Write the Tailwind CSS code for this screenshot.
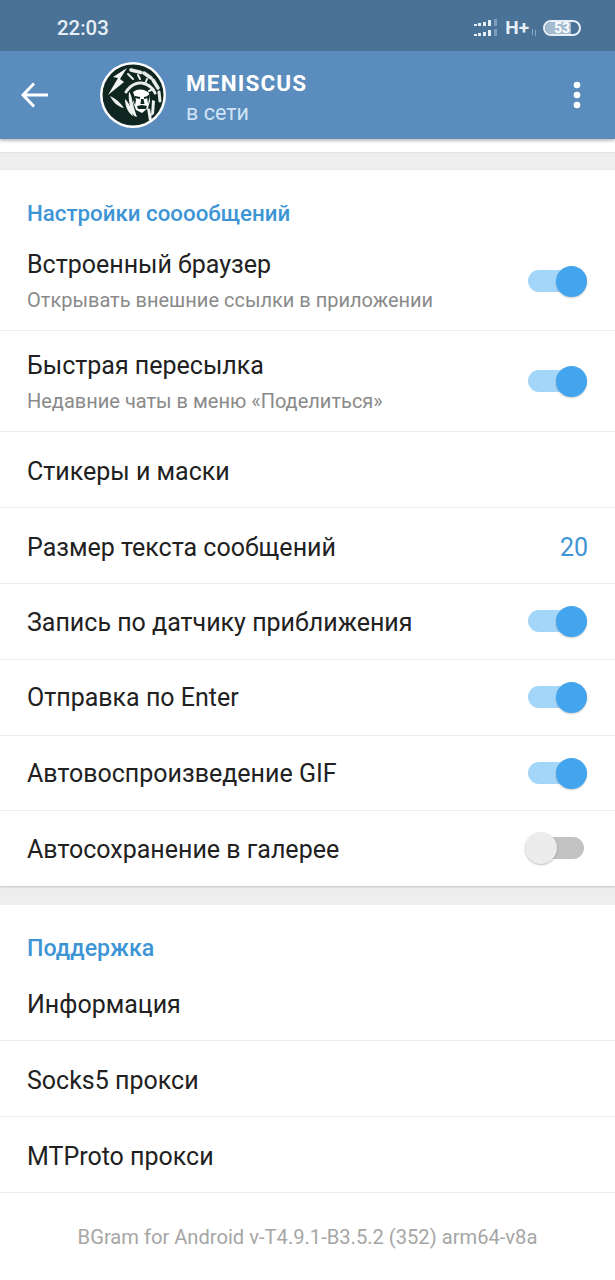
<!DOCTYPE html>
<html lang="en">
  <head>
    <meta charset="UTF-8" />
    <meta name="viewport" content="width=device-width, initial-scale=1.0" />
    <title>Настройки</title>
    <script src="https://cdn.jsdelivr.net/npm/@tailwindcss/browser@4"></script>
  </head>
  <body class="bg-white">
    <div class="w-[615px] h-[1280px] overflow-hidden font-['Roboto',sans-serif] text-[#212121] flex flex-col">
      <!-- Status bar -->
      <div class="h-[51px] shrink-0 bg-[#4a7297] flex items-center text-[#e6eef6]">
        <span class="ml-[57px] text-[20.400px] font-medium leading-none mt-[6px]">22:03</span>
        <div class="ml-auto mr-[34px] flex items-center mt-[4px]">
          <svg width="24" height="18" viewBox="0 0 24 18" fill="#e6eef6">
            <rect x="0" y="5" width="3" height="2" /><rect x="4" y="4" width="3" height="3" /><rect x="9" y="3" width="3" height="4" /><rect x="14" y="1" width="3" height="6" /><rect x="20" y="0" width="3" height="7" fill="#7f9cb8" />
            <rect x="0" y="15" width="3" height="2" /><rect x="4" y="14" width="3" height="3" /><rect x="9" y="13" width="3" height="4" /><rect x="14" y="11" width="3" height="6" /><rect x="20" y="10" width="3" height="7" fill="#7f9cb8" />
          </svg>
          <span class="ml-[7px] text-[19px] font-bold leading-none">H+</span>
          <svg class="ml-[2px] mt-[9px]" width="6" height="7" viewBox="0 0 6 7" stroke="#8faac4" fill="none">
            <path d="M1.500 0v6M4.500 1v6" />
          </svg>
          <div class="ml-[6px] relative w-[38px] h-[16px] rounded-full border-2 border-[#e6eef6] overflow-hidden">
            <div class="absolute left-0 top-0 bottom-0 w-[26px] bg-[#a5bbd0]"></div>
            <span class="absolute inset-0 flex items-center justify-center text-[14px] font-bold leading-none text-white">53</span>
          </div>
        </div>
      </div>

      <!-- Toolbar -->
      <header class="h-[88px] shrink-0 bg-[#5a8dbe] flex items-center relative z-10 shadow-[0_2px_3px_rgba(0,0,0,0.25)]">
        <svg class="ml-[21px]" width="28" height="26" viewBox="0 0 28 26" fill="none" stroke="#fff" stroke-width="3">
          <path d="M27 13H2M13 1.500 2 13l11 11.500" />
        </svg>
        <!-- Chief emblem avatar -->
        <svg class="ml-[51px]" width="66" height="66" viewBox="0 0 66 66">
          <circle cx="33" cy="33" r="33" fill="#fff" />
          <circle cx="33" cy="33" r="30.500" fill="#0f2620" />
          <!-- headdress -->
          <path d="M27 6 13 15l5 1-10 17 16-13-4-3z" fill="#f4f6f4" />
          <g fill="none" stroke="#e8ede9" stroke-linecap="round">
            <path d="M31 8l10 2.500" stroke-width="3.500" />
            <path d="M44 11l7 5" stroke-width="3.500" />
            <path d="M53 18l5 8" stroke-width="3.500" />
            <path d="M59 30l1 9" stroke-width="3" />
            <path d="M26 30c4-6 9-9 14-9s12 3 15 10" stroke-width="3" stroke-dasharray="4 1" />
            <path d="M28 12l5 5M38 13l2 4M47 17l-2 5M53 27l-4 2" stroke-width="2" />
          </g>
          <!-- lower feathers -->
          <path d="M10 34c5 2 10 6 14 12-6-1-11-6-14-12zM25 37c4 4 7 10 8 17-5-3-8-10-8-17zM52 38l3 1-1 13-3 2zM29 30c3 2 3 12 8 25l-3-1c-4-7-6-16-5-24zM47 46l3 1 2 11-3 1z" fill="#eef2ef" />
          <!-- face -->
          <path d="M33 30c5-4 12-3 16 1l1 8-2 7-6 5-6-3-3-8z" fill="#fff" />
          <path d="M35 34l5 1v2l-5-1zM44 35l4-1v2l-4 1zM41 37h2.500l1 5h-4zM37 44l5-1 5 1-1 3h-8zM33 30l3 8-1 5-2-5zM50 32l-2 10-1-8z" fill="#0f2620" />
        </svg>
        <div class="ml-[20px] flex flex-col">
          <span class="text-[22.500px] font-bold tracking-[1.150px] text-white leading-[26px] mt-[6px]">MENISCUS</span>
          <span class="text-[21.500px] text-[#cfe3f5] leading-[26px] mt-[4px]">в сети</span>
        </div>
        <svg class="ml-auto mr-[33px]" width="10" height="28" viewBox="0 0 10 28" fill="#fff">
          <circle cx="5" cy="4" r="3.300" /><circle cx="5" cy="14" r="3.300" /><circle cx="5" cy="24" r="3.300" />
        </svg>
      </header>

      <div class="h-[13px] shrink-0 bg-white"></div>
      <div class="h-[18px] shrink-0 bg-[#eeeeee] border-t border-[#e2e2e2]"></div>

      <!-- Message settings -->
      <section class="h-[716px] shrink-0 flex flex-col shadow-[0_1px_2px_rgba(0,0,0,0.18)] relative">
        <h2 class="h-[61px] shrink-0 pt-[30px] pl-[27px] text-[22.300px] font-medium text-[#3d95d5] leading-[26px]">Настройки сооообщений</h2>
        <!-- Rows with a subtitle -->
        <div class="h-[100px] shrink-0 pl-[27px] pr-[28px] flex items-center justify-between border-b border-[#ececec]">
          <div class="flex flex-col">
            <span class="text-[25px] leading-[30px] mt-[1px]">Встроенный браузер</span>
            <span class="text-[20px] text-[#8a8a8a] leading-[24px] mt-[8px]">Открывать внешние ссылки в приложении</span>
          </div>
          <div class="relative w-[59px] h-[22px] rounded-full bg-[#a3d6f9]">
            <div class="absolute right-0 top-[-4px] w-[31px] h-[31px] rounded-full bg-[#42a5ed] shadow-[0_1px_2px_rgba(0,0,0,0.2)]"></div>
          </div>
        </div>
        <div class="h-[101px] shrink-0 pl-[27px] pr-[28px] flex items-center justify-between border-b border-[#ececec]">
          <div class="flex flex-col">
            <span class="text-[25px] leading-[30px] mt-[1px]">Быстрая пересылка</span>
            <span class="text-[20px] text-[#8a8a8a] leading-[24px] mt-[8px]">Недавние чаты в меню «Поделиться»</span>
          </div>
          <div class="relative w-[59px] h-[22px] rounded-full bg-[#a3d6f9]">
            <div class="absolute right-0 top-[-4px] w-[31px] h-[31px] rounded-full bg-[#42a5ed] shadow-[0_1px_2px_rgba(0,0,0,0.2)]"></div>
          </div>
        </div>
        <!-- Single line rows -->
        <div class="h-[76px] shrink-0 pl-[27px] pr-[28px] flex items-center justify-between border-b border-[#ececec]">
          <span class="text-[25px] leading-[30px] mt-[4px]">Стикеры и маски</span>
        </div>
        <div class="h-[76px] shrink-0 pl-[27px] pr-[27px] flex items-center justify-between border-b border-[#ececec]">
          <span class="text-[25px] leading-[30px] mt-[4px]">Размер текста сообщений</span>
          <span class="text-[25px] leading-[30px] text-[#3d95d5] mt-[4px]">20</span>
        </div>
        <div class="h-[76px] shrink-0 pl-[27px] pr-[28px] flex items-center justify-between border-b border-[#ececec]">
          <span class="text-[25px] leading-[30px] mt-[3px]">Запись по датчику приближения</span>
          <div class="relative w-[59px] h-[22px] rounded-full bg-[#a3d6f9] mt-[-2px]">
            <div class="absolute right-0 top-[-4px] w-[31px] h-[31px] rounded-full bg-[#42a5ed] shadow-[0_1px_2px_rgba(0,0,0,0.2)]"></div>
          </div>
        </div>
        <div class="h-[76px] shrink-0 pl-[27px] pr-[28px] flex items-center justify-between border-b border-[#ececec]">
          <span class="text-[25px] leading-[30px] mt-[1px]">Отправка по Enter</span>
          <div class="relative w-[59px] h-[22px] rounded-full bg-[#a3d6f9] mt-[-2px]">
            <div class="absolute right-0 top-[-4px] w-[31px] h-[31px] rounded-full bg-[#42a5ed] shadow-[0_1px_2px_rgba(0,0,0,0.2)]"></div>
          </div>
        </div>
        <div class="h-[75px] shrink-0 pl-[27px] pr-[28px] flex items-center justify-between border-b border-[#ececec]">
          <span class="text-[25px] leading-[30px] mt-[1px]">Автовоспроизведение GIF</span>
          <div class="relative w-[59px] h-[22px] rounded-full bg-[#a3d6f9]">
            <div class="absolute right-0 top-[-4px] w-[31px] h-[31px] rounded-full bg-[#42a5ed] shadow-[0_1px_2px_rgba(0,0,0,0.2)]"></div>
          </div>
        </div>
        <div class="h-[75px] shrink-0 pl-[27px] pr-[28px] flex items-center justify-between">
          <span class="text-[25px] leading-[30px] mt-[2px]">Автосохранение в галерее</span>
          <div class="relative w-[59px] h-[22px] rounded-full bg-[#c2c2c2] mt-[-1px] mr-[3px]">
            <div class="absolute left-0 top-[-5px] w-[32px] h-[32px] rounded-full bg-[#ececec] shadow-[0_1px_2px_rgba(0,0,0,0.25)]"></div>
          </div>
        </div>
      </section>

      <div class="h-[19px] shrink-0 bg-[#eeeeee]"></div>

      <!-- Support -->
      <section class="flex flex-col">
        <h2 class="h-[60px] shrink-0 pt-[30px] pl-[27px] text-[23.200px] font-medium text-[#3d95d5] leading-[26px]">Поддержка</h2>
        <div class="h-[76px] shrink-0 pl-[27px] flex items-center border-b border-[#ececec]">
          <span class="text-[25px] leading-[30px] mt-[4px]">Информация</span>
        </div>
        <div class="h-[76px] shrink-0 pl-[27px] flex items-center border-b border-[#ececec]">
          <span class="text-[25px] leading-[30px] mt-[4px]">Socks5 прокси</span>
        </div>
        <div class="h-[76px] shrink-0 pl-[27px] flex items-center border-b border-[#ececec]">
          <span class="text-[25px] leading-[30px] mt-[4px]">MTProto прокси</span>
        </div>
        <p class="pt-[31px] text-center text-[20.150px] leading-[26px] text-[#a6a6a6]">BGram for Android v-T4.9.1-B3.5.2 (352) arm64-v8a</p>
      </section>
    </div>
  </body>
</html>
